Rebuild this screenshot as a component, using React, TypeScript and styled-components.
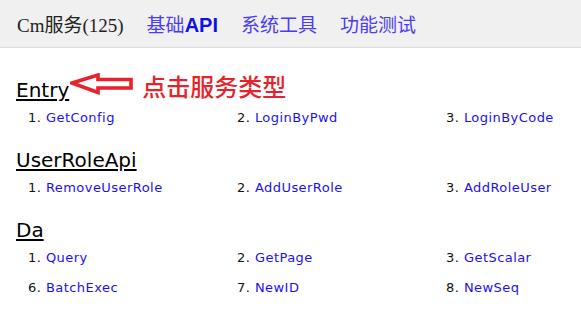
import styled, { createGlobalStyle } from "styled-components";

type Method = { no: number; name: string };
type Service = { name: string; methods: Method[]; hint?: string };

const services: Service[] = [
  {
    name: "Entry",
    hint: "点击服务类型",
    methods: [
      { no: 1, name: "GetConfig" },
      { no: 2, name: "LoginByPwd" },
      { no: 3, name: "LoginByCode" },
    ],
  },
  {
    name: "UserRoleApi",
    methods: [
      { no: 1, name: "RemoveUserRole" },
      { no: 2, name: "AddUserRole" },
      { no: 3, name: "AddRoleUser" },
    ],
  },
  {
    name: "Da",
    methods: [
      { no: 1, name: "Query" },
      { no: 2, name: "GetPage" },
      { no: 3, name: "GetScalar" },
      { no: 6, name: "BatchExec" },
      { no: 7, name: "NewID" },
      { no: 8, name: "NewSeq" },
    ],
  },
];

const GlobalStyle = createGlobalStyle`
  body {
    margin: 0;
    background: #fff;
    font-family: "DejaVu Sans", Verdana, sans-serif;
  }
`;

const TopBar = styled.div`
  height: 47px;
  display: flex;
  align-items: center;
  gap: 23px;
  padding-left: 17px;
  background: #f0f0f0;
  border-bottom: 1px solid #dcdcdc;
  font-family: "Liberation Serif", "Noto Sans CJK SC", serif;
  font-size: 19px;
`;

const Tab = styled.a<{ $title?: boolean }>`
  color: ${(p) => (p.$title ? "#222" : "#4a3cf0")};
  text-decoration: none;
  cursor: pointer;
`;

const Latin = styled.span`
  font-family: "Liberation Sans", Arial, sans-serif;
  font-weight: bold;
  font-size: 20px;
  color: #1010e8;
`;

const Main = styled.div`
  padding: 30px 16px 0;
`;

const Section = styled.section`
  margin-top: 15px;
  &:first-child {
    margin-top: 0;
  }
`;

const HeadingRow = styled.div`
  position: relative;
  display: inline-block;
`;

const Heading = styled.h2`
  margin: 0;
  font-size: 20px;
  line-height: 24px;
  font-weight: normal;
  color: #000;
  text-decoration: underline;
  text-underline-offset: 2px;
`;

const Callout = styled.div`
  position: absolute;
  left: calc(100% + 1px);
  top: -5px;
  display: flex;
  align-items: flex-start;
  gap: 8px;
  white-space: nowrap;
`;

const CalloutText = styled.span`
  margin-top: 1px;
  font-family: "Noto Sans CJK SC", sans-serif;
  font-size: 24px;
  line-height: 24px;
  font-weight: 500;
  color: #e8222a;
`;

const MethodGrid = styled.ul`
  list-style: none;
  margin: 0;
  padding: 1px 0 0 12px;
  display: grid;
  grid-template-columns: 209px 209px 1fr;
`;

const MethodItem = styled.li`
  font-size: 13px;
  letter-spacing: 0.45px;
  line-height: 30px;
  color: #111;
  white-space: nowrap;
`;

const MethodLink = styled.a`
  color: #1a10f5;
  text-decoration: none;
  cursor: pointer;
`;

const Arrow = () => (
  <svg width="64" height="22" viewBox="0 0 64 22">
    <path
      d="M2 10 L28 2 L28 6.5 L61 6.5 L61 15 L28 15 L28 19.5 Z"
      fill="#fff"
      stroke="#e8222a"
      strokeWidth="3.6"
      strokeLinejoin="miter"
    />
  </svg>
);

export default function App() {
  return (
    <>
      <GlobalStyle />
      <TopBar>
        <Tab $title>Cm服务(125)</Tab>
        <Tab>
          基础<Latin>API</Latin>
        </Tab>
        <Tab>系统工具</Tab>
        <Tab>功能测试</Tab>
      </TopBar>
      <Main>
        {services.map((s) => (
          <Section key={s.name}>
            <HeadingRow>
              <Heading>{s.name}</Heading>
              {s.hint && (
                <Callout>
                  <Arrow />
                  <CalloutText>{s.hint}</CalloutText>
                </Callout>
              )}
            </HeadingRow>
            <MethodGrid>
              {s.methods.map((m) => (
                <MethodItem key={m.no}>
                  {m.no}. <MethodLink>{m.name}</MethodLink>
                </MethodItem>
              ))}
            </MethodGrid>
          </Section>
        ))}
      </Main>
    </>
  );
}
